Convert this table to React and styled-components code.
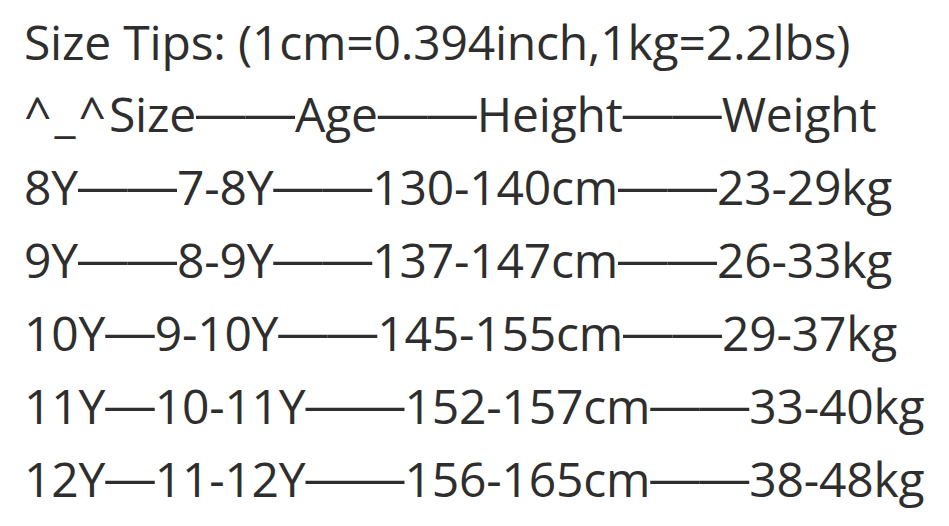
import React from 'react';
import styled, { createGlobalStyle } from 'styled-components';

const Global = createGlobalStyle`
  html, body {
    margin: 0;
    padding: 0;
    background: #fff;
  }
`;

const Sheet = styled.div`
  display: flex;
  flex-direction: column;
  padding: 6px 0 0 24px;
  font-family: 'Open Sans', 'Noto Sans', sans-serif;
  font-size: 48px;
  line-height: 72px;
  color: #2e2e2e;
  letter-spacing: -0.2px;
`;

const Line = styled.div`
  white-space: nowrap;
`;

// full-width dashes that join up, as in the picture
const Dash = styled.span`
  font-family: 'Liberation Sans', sans-serif;
  font-size: 49.5px;
  letter-spacing: 0;
  position: relative;
  top: -2px;
`;

const Face = styled.span`
  letter-spacing: 3px;
`;

const lines = [
  'Size Tips: (1cm=0.394inch,1kg=2.2lbs)',
  '^_^Size——Age——Height——Weight',
  '8Y——7-8Y——130-140cm——23-29kg',
  '9Y——8-9Y——137-147cm——26-33kg',
  '10Y—9-10Y——145-155cm——29-37kg',
  '11Y—10-11Y——152-157cm——33-40kg',
  '12Y—11-12Y——156-165cm——38-48kg',
];

const renderLine = (text) =>
  text.split(/(—+|\^_\^)/).map((part, i) => {
    if (part.startsWith('—')) return <Dash key={i}>{part}</Dash>;
    if (part === '^_^') return <Face key={i}>{part}</Face>;
    return part;
  });

export default function App() {
  return (
    <>
      <Global />
      <Sheet>
        {lines.map((l) => (
          <Line key={l}>{renderLine(l)}</Line>
        ))}
      </Sheet>
    </>
  );
}
